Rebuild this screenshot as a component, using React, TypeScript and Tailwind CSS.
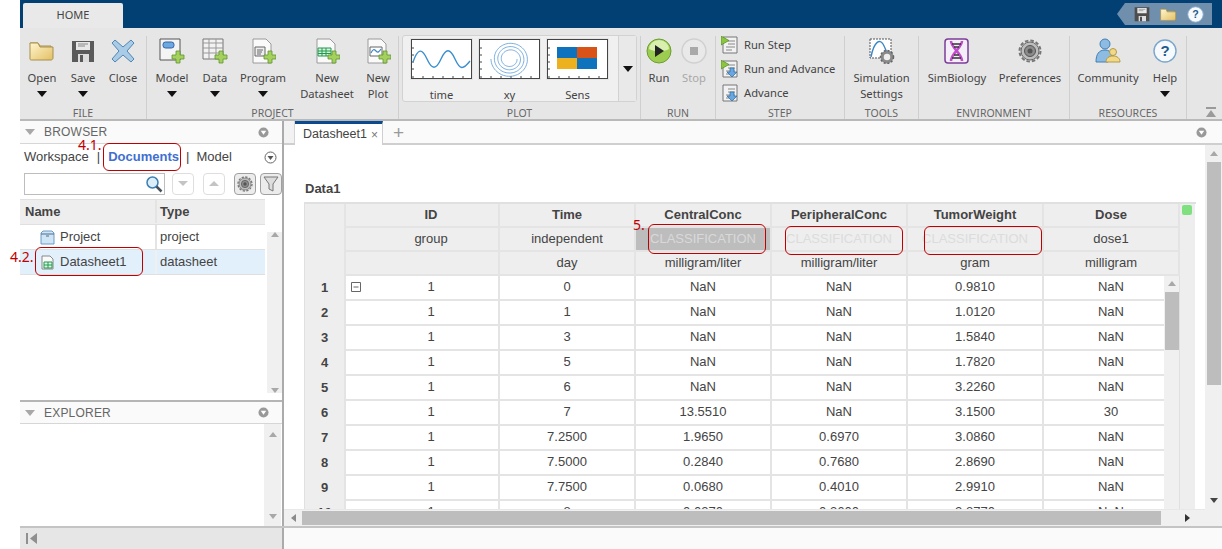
import type { ReactNode } from "react";

const UI = "font-['Noto_Sans','Open_Sans',sans-serif]";
const ARIAL = "font-['Liberation_Sans',Arial,sans-serif]";

function Caret({ className = "" }: { className?: string }) {
  return (
    <svg width="10" height="6" viewBox="0 0 10 6" className={className}>
      <path d="M0 0h10L5 6z" fill="#111" />
    </svg>
  );
}

function Tri({ d, fill = "#a8a8a8", w = 10, h = 6 }: { d: string; fill?: string; w?: number; h?: number }) {
  return (
    <svg width={w} height={h} viewBox={`0 0 ${w} ${h}`}>
      <path d={d} fill={fill} />
    </svg>
  );
}

function FolderIcon({ size = 26 }: { size?: number }) {
  return (
    <svg width={size} height={size} viewBox="0 0 26 26">
      <path d="M1 5h8l2 3h11v3H4z" fill="#e9d9a0" stroke="#a98f4d" />
      <path d="M1 5v16c0 1 1 1 2 1h19c1 0 2-1 2-2V9H11L9 5z" fill="url(#fo)" stroke="#a98f4d" />
      <defs>
        <linearGradient id="fo" x1="0" y1="0" x2="1" y2="1">
          <stop offset="0" stopColor="#fff6cf" />
          <stop offset="1" stopColor="#e3bf63" />
        </linearGradient>
      </defs>
    </svg>
  );
}

function SaveIcon({ size = 24, color = "#5a5a5a" }: { size?: number; color?: string }) {
  return (
    <svg width={size} height={size} viewBox="0 0 24 24">
      <path d="M1 2h22v21H1z" fill={color} />
      <path d="M5 3h14v8H5z" fill="#e8e8e8" />
      <path d="M7 5h10M7 7h7" stroke="#888" />
      <path d="M7 15h11v8H7z" fill="#ddd" />
      <path d="M9 16h3v7H9z" fill={color} />
    </svg>
  );
}

function CloseIcon() {
  return (
    <svg width="26" height="26" viewBox="0 0 26 26">
      <path
        d="M5 2l8 7 8-7 3 3-7 8 7 8-3 3-8-7-8 7-3-3 7-8-7-8z"
        fill="#a9cbe6"
        stroke="#4f86b5"
        strokeLinejoin="round"
      />
    </svg>
  );
}

function Plus({ x, y }: { x: number; y: number }) {
  return (
    <path
      transform={`translate(${x} ${y})`}
      d="M4 0h4v4h4v4H8v4H4V8H0V4h4z"
      fill="#a4d05c"
      stroke="#5f9430"
      strokeWidth="0.8"
    />
  );
}

function DocBase() {
  return <path d="M3 1h13l5 5v19H3z" fill="#fafafa" stroke="#9a9a9a" />;
}

function ModelIcon() {
  return (
    <svg width="26" height="26" viewBox="0 0 26 26">
      <path d="M1 1h20v21H1z" fill="#f4f4f4" stroke="#555" />
      <rect x="4" y="4" width="11" height="6" rx="2.5" fill="#6fa8e0" stroke="#2f64a8" />
      <Plus x={13} y={13} />
    </svg>
  );
}

function DataIcon() {
  return (
    <svg width="26" height="26" viewBox="0 0 26 26">
      <path d="M1 1h20v20H1z" fill="#f2f2f2" stroke="#777" />
      <path d="M1 5h20M1 10h20M1 15h20M7 1v20M14 1v20" stroke="#999" />
      <Plus x={13} y={13} />
    </svg>
  );
}

function ProgramIcon() {
  return (
    <svg width="26" height="26" viewBox="0 0 26 26">
      <DocBase />
      <path d="M5 9h10v9H5z" fill="#eee" stroke="#666" />
      <path d="M7 12h6M7 14h5M7 16h4" stroke="#666" />
      <Plus x={14} y={13} />
    </svg>
  );
}

function DatasheetIcon() {
  return (
    <svg width="26" height="26" viewBox="0 0 26 26">
      <DocBase />
      <path d="M4 10h13v8H4z" fill="#dff2e0" stroke="#1d9b4c" />
      <path d="M4 13h13M4 15.5h13M8 10v8M12 10v8" stroke="#1d9b4c" />
      <Plus x={14} y={13} />
    </svg>
  );
}

function PlotDocIcon() {
  return (
    <svg width="26" height="26" viewBox="0 0 26 26">
      <DocBase />
      <path d="M5 9h12v9H5z" fill="#fff" stroke="#666" />
      <path d="M6 15c2-4 3-4 5-2s3 1 5-2" stroke="#3b87c9" fill="none" strokeWidth="1.2" />
      <Plus x={14} y={13} />
    </svg>
  );
}

function Thumb({ children }: { children: ReactNode }) {
  return (
    <div className="w-[61px] h-[40px] bg-white border border-[#444] shadow-[0_0_0_1px_#e4e4e4]">
      <svg width="59" height="38" viewBox="0 0 59 38">
        <path
          d="M1 38v-2M11 38v-2M21 38v-2M31 38v-2M41 38v-2M51 38v-2M0 8h2M0 15h2M0 22h2M0 29h2"
          stroke="#444"
        />
        {children}
      </svg>
    </div>
  );
}

function Spiral() {
  const pts: string[] = [];
  for (let i = 0; i <= 220; i++) {
    const t = (i / 220) * Math.PI * 7;
    const r = 7 + 0.55 * t;
    pts.push(`${(30 + r * Math.cos(t)).toFixed(1)},${(19 + r * 0.95 * Math.sin(t)).toFixed(1)}`);
  }
  return <polyline points={pts.join(" ")} fill="none" stroke="#5b9bd5" strokeWidth="0.8" />;
}

function RunButton() {
  return (
    <svg width="26" height="26" viewBox="0 0 26 26">
      <circle cx="13" cy="13" r="12" fill="#9ccc50" stroke="#6d9e32" />
      <path d="M3 11a10 9 0 0 1 20 0c-5 3-15 3-20 0z" fill="#d9efaf" />
      <path d="M9 7l9 6-9 6z" fill="#222" />
    </svg>
  );
}

function StopButton() {
  return (
    <svg width="26" height="26" viewBox="0 0 26 26">
      <circle cx="13" cy="13" r="12" fill="#e9e9e9" stroke="#d0d0d0" strokeWidth="1.5" />
      <rect x="9" y="9" width="8" height="8" fill="#a9a9a9" />
    </svg>
  );
}

function StepIcon({ down, play }: { down?: boolean; play?: boolean }) {
  return (
    <svg width="18" height="18" viewBox="0 0 18 18">
      <path d="M2 1h14v16H2z" fill="#f2f2f2" stroke="#777" />
      <path d="M7 5h7M7 8h7M5 11h9M5 14h6" stroke="#888" />
      {play && <path d="M0 0l8 4.500-8 4.500z" fill="#8cc63f" stroke="#4e8a1f" strokeWidth="0.7" />}
      {down && <path d="M9 8h4v4h3l-5 5-5-5h3z" fill="#6aa7de" stroke="#2a6aa8" strokeWidth="0.7" />}
    </svg>
  );
}

function SimSettingsIcon() {
  return (
    <svg width="26" height="26" viewBox="0 0 26 26">
      <path d="M1 1h21v19H1z" fill="#fff" stroke="#555" strokeDasharray="2 1" />
      <path d="M2 19C5 3 11 1 14 6s3 9 6 11" fill="none" stroke="#3b87c9" strokeWidth="1.4" />
      <SmallGear x={18} y={19} r={6.500} />
    </svg>
  );
}

function SmallGear({ x, y, r }: { x: number; y: number; r: number }) {
  return (
    <g>
      <circle cx={x} cy={y} r={r} fill="#8a8a8a" />
      <circle cx={x} cy={y} r={r} fill="none" stroke="#666" strokeWidth="1.500" strokeDasharray="2 1.800" />
      <circle cx={x} cy={y} r={r * 0.5} fill="#eee" />
    </g>
  );
}

function GearIcon({ size = 24 }: { size?: number }) {
  return (
    <svg width={size} height={size} viewBox="0 0 24 24">
      <circle cx="12" cy="12" r="9" fill="#bdbdbd" stroke="#666" />
      <circle cx="12" cy="12" r="10.500" fill="none" stroke="#777" strokeWidth="2" strokeDasharray="3.500 2" />
      <circle cx="12" cy="12" r="5.500" fill="#8c8c8c" stroke="#555" />
      <circle cx="12" cy="12" r="2.500" fill="#555" />
    </svg>
  );
}

function SimBiologyIcon() {
  return (
    <svg width="26" height="26" viewBox="0 0 26 26">
      <rect x="1" y="1" width="23" height="24" rx="3" fill="#f4eef8" stroke="#7b3f98" strokeWidth="1.500" />
      <path d="M7 3c0 7 11 12 11 20M18 3c0 7-11 12-11 20" fill="none" stroke="#c04ccb" strokeWidth="2.500" />
      <path d="M8 6h9M10 9h5M10 17h5M8 20h9" stroke="#333" strokeWidth="1.300" />
    </svg>
  );
}

function CommunityIcon() {
  return (
    <svg width="26" height="26" viewBox="0 0 26 26">
      <circle cx="10" cy="6" r="5" fill="#8dbbe2" stroke="#3f7fb5" />
      <path d="M1 24c0-8 3-12 9-12 4 0 6 2 7 5l-4 7z" fill="#8dbbe2" stroke="#3f7fb5" />
      <circle cx="18" cy="14" r="3.500" fill="#f2d98a" stroke="#b39a42" />
      <path d="M11 24c0-4 3-6 7-6s7 2 7 6z" fill="#f2d98a" stroke="#b39a42" />
    </svg>
  );
}

function HelpIcon({ size = 24 }: { size?: number }) {
  return (
    <svg width={size} height={size} viewBox="0 0 24 24">
      <circle cx="12" cy="12" r="11" fill="#f7fafd" stroke="#7ba6cc" strokeWidth="1.400" />
      <text x="12" y="17" textAnchor="middle" fontSize="15" fontWeight="700" fontFamily="Liberation Sans" fill="#1f5a8e">
        ?
      </text>
    </svg>
  );
}

function RibbonItem({
  w,
  icon,
  lines,
  caret,
  muted,
  className = "",
}: {
  w: string;
  icon: ReactNode;
  lines: string[];
  caret?: boolean;
  muted?: boolean;
  className?: string;
}) {
  return (
    <div className={`flex flex-col items-center pt-[2px] ${w} ${className}`}>
      <div className="h-[26px] flex items-center justify-center">{icon}</div>
      <div className={`mt-[6px] text-[11.200px] leading-[16px] text-center whitespace-nowrap ${muted ? "text-[#a8a8a8]" : "text-[#444]"}`}>
        {lines.map((l) => (
          <div key={l}>{l}</div>
        ))}
      </div>
      {caret && <Caret className="mt-[5px]" />}
    </div>
  );
}

function Section({ w, label, children, className = "" }: { w: string; label: string; children: ReactNode; className?: string }) {
  return (
    <div className={`${w} shrink-0 mt-[8px] flex flex-col border-r border-[#cfcfcf] ${className}`}>
      <div className="flex h-[70px]">{children}</div>
      <div className="h-[14px] pt-[1px] leading-[14px] text-[10.500px] text-[#666] text-center whitespace-nowrap">{label}</div>
    </div>
  );
}

function StepRow({ icon, label }: { icon: ReactNode; label: string }) {
  return (
    <div className="h-[24px] shrink-0 flex items-center pl-[5px] gap-[5px] text-[11.200px] text-[#444] whitespace-nowrap">
      {icon}
      <span>{label}</span>
    </div>
  );
}

function Ribbon() {
  return (
    <div className={`${UI} h-[93px] bg-[#e6e6e6] border-b-2 border-[#b9b9b9] flex`}>
      <Section w="w-[127px]" label="FILE">
        <div className="w-[2px]" />
        <RibbonItem w="w-[40px]" icon={<FolderIcon />} lines={["Open"]} caret className="" />
        <RibbonItem w="w-[42px]" icon={<SaveIcon />} lines={["Save"]} caret />
        <RibbonItem w="w-[38px]" icon={<CloseIcon />} lines={["Close"]} />
      </Section>
      <Section w="w-[252px]" label="PROJECT">
        <div className="w-[3px]" />
        <RibbonItem w="w-[44px]" icon={<ModelIcon />} lines={["Model"]} caret />
        <RibbonItem w="w-[42px]" icon={<DataIcon />} lines={["Data"]} caret />
        <RibbonItem w="w-[54px]" icon={<ProgramIcon />} lines={["Program"]} caret />
        <RibbonItem w="w-[60px] ml-[7px]" icon={<DatasheetIcon />} lines={["New", "Datasheet"]} />
        <RibbonItem w="w-[36px] ml-[3px]" icon={<PlotDocIcon />} lines={["New", "Plot"]} />
      </Section>
      <Section w="w-[242px]" label="PLOT">
        <div className="ml-[3px] w-[235px] h-[67px] -mt-[1px] bg-[#f0f0f0] border border-[#d2d2d2] rounded-[3px] flex">
          <div className="w-[215px] pl-[8px] pt-[3px] flex gap-[7px]">
            {[
              {
                n: "time",
                c: <path d="M1 22C6 8 10 8 15 19s9 11 14 0 9-11 14 0 8 11 15 2" fill="none" stroke="#3b8fce" strokeWidth="1.400" />,
              },
              { n: "xy", c: <Spiral /> },
              {
                n: "Sens",
                c: (
                  <g>
                    <path d="M9 7h20v11H9z" fill="#0f72bd" />
                    <path d="M29 7h20v11H29z" fill="#d95319" />
                    <path d="M9 18h20v11H9z" fill="#edb120" />
                    <path d="M29 18h20v11H29z" fill="#0f72bd" />
                  </g>
                ),
              },
            ].map((t) => (
              <div key={t.n} className="w-[61px] flex flex-col items-center">
                <Thumb>{t.c}</Thumb>
                <div className="mt-[8px] text-[11.200px] leading-[16px] text-[#444]">{t.n}</div>
              </div>
            ))}
          </div>
          <div className="flex-1 border-l border-[#d2d2d2] bg-[#e9e9e9] flex items-center justify-center">
            <Caret />
          </div>
        </div>
      </Section>
      <Section w="w-[75px]" label="RUN">
        <RibbonItem w="w-[36px]" icon={<RunButton />} lines={["Run"]} />
        <RibbonItem w="w-[34px]" icon={<StopButton />} lines={["Stop"]} muted />
      </Section>
      <Section w="w-[129px]" label="STEP">
        <div className="flex flex-col -mt-[3px]">
          <StepRow icon={<StepIcon play />} label="Run Step" />
          <StepRow icon={<StepIcon play down />} label="Run and Advance" />
          <StepRow icon={<StepIcon down />} label="Advance" />
        </div>
      </Section>
      <Section w="w-[74px]" label="TOOLS">
        <RibbonItem w="w-[73px]" icon={<SimSettingsIcon />} lines={["Simulation", "Settings"]} />
      </Section>
      <Section w="w-[151px]" label="ENVIRONMENT">
        <RibbonItem w="w-[76px]" icon={<SimBiologyIcon />} lines={["SimBiology"]} />
        <RibbonItem w="w-[70px]" icon={<GearIcon />} lines={["Preferences"]} />
      </Section>
      <Section w="w-[117px]" label="RESOURCES">
        <RibbonItem w="w-[76px]" icon={<CommunityIcon />} lines={["Community"]} />
        <RibbonItem w="w-[38px]" icon={<HelpIcon />} lines={["Help"]} caret />
      </Section>
      <div className="flex-1 flex items-end justify-center pb-[1px] pl-[13px]">
        <svg width="12" height="12" viewBox="0 0 12 12">
          <path d="M1 1h10v2H1z" fill="#9a9a9a" />
          <path d="M6 4l5 7H1z" fill="#9a9a9a" />
        </svg>
      </div>
    </div>
  );
}

function PanelHeader({ label, h }: { label: string; h: string }) {
  return (
    <div className={`${h} shrink-0 bg-[#fafafa] border-b border-[#d6d6d6] flex items-center pl-[5px] pr-[13px] text-[12px] text-[#666] ${ARIAL}`}>
      <Tri d="M0 0h10L5 6z" />
      <span className="ml-[9px] tracking-[0.2px]">{label}</span>
      <svg width="11" height="11" viewBox="0 0 12 12" className="ml-auto">
        <circle cx="6" cy="6" r="5.500" fill="#999" />
        <path d="M3 4h6L6 8.500z" fill="#fff" />
      </svg>
    </div>
  );
}

function SmallButton({ children, active }: { children: ReactNode; active?: boolean }) {
  return (
    <div className={`w-[22px] h-[22px] rounded-[4px] border flex items-center justify-center ${active ? "border-[#a0a0a0] bg-[#ececec]" : "border-[#dedede] bg-white"}`}>
      {children}
    </div>
  );
}

function Browser() {
  return (
    <div className={`${ARIAL} w-[264px] shrink-0 flex flex-col border-r-2 border-[#ababab]`}>
      <PanelHeader label="BROWSER" h="h-[23px]" />
      <div className="h-[26px] shrink-0 flex items-center pl-[4px] pr-[5px] text-[13px] text-[#444] whitespace-nowrap">
        <span>Workspace</span>
        <span className="ml-[8px]">|</span>
        <span className="ml-[8px] font-bold text-[#3f6fd0]">Documents</span>
        <span className="ml-[7px]">|</span>
        <span className="ml-[7px]">Model</span>
        <svg width="13" height="13" viewBox="0 0 13 13" className="ml-auto">
          <circle cx="6.500" cy="6.500" r="5.500" fill="#fff" stroke="#666" />
          <path d="M3.500 5h6l-3 4z" fill="#555" />
        </svg>
      </div>
      <div className="h-[29px] shrink-0 flex items-center pl-[4px] pb-[1px]">
        <div className="w-[148px] h-[22px] border border-[#bdbdbd] flex items-center justify-end pr-[1px]">
          <svg width="18" height="18" viewBox="0 0 18 18">
            <circle cx="7.500" cy="7.500" r="5.500" fill="#dceefa" stroke="#3c7fb0" strokeWidth="1.500" />
            <path d="M11.500 11.500l5 5" stroke="#45525c" strokeWidth="2.500" />
          </svg>
        </div>
        <div className="ml-[7px] flex gap-[4px]">
          <SmallButton>
            <Tri d="M0 0h10L5 5z" fill="#c4c4c4" />
          </SmallButton>
          <div className="w-[1px]" />
          <SmallButton>
            <Tri d="M0 5h10L5 0z" fill="#c4c4c4" />
          </SmallButton>
          <div className="w-[1px]" />
          <SmallButton active>
            <GearIcon size={16} />
          </SmallButton>
          <SmallButton active>
            <svg width="16" height="16" viewBox="0 0 16 16">
              <path d="M1 1h14L10 8v7l-4-2V8z" fill="#ddd" stroke="#777" />
            </svg>
          </SmallButton>
        </div>
      </div>
      <div className="h-[203px] shrink-0 flex text-[13px] text-[#444] border-b-2 border-[#b5b5b5]">
        <div className="w-[245px] flex flex-col">
          <div className="h-[26px] pb-[1px] bg-[#eeeeee] border-y border-[#e0e0e0] flex font-bold items-center">
            <span className="w-[137px] pl-[5px] border-r-2 border-[#e4e4e4] h-full flex items-center">Name</span>
            <span className="pl-[3px]">Type</span>
          </div>
          <div className="h-[25px] flex items-center border-b border-[#e0e0e0]">
            <div className="w-[137px] pl-[20px] border-r-2 border-[#e4e4e4] h-full flex items-center gap-[5px]">
              <svg width="15" height="15" viewBox="0 0 15 15">
                <path d="M1 3l2-2h9l2 2v11H1z" fill="#cfe4f5" stroke="#6a9cc4" />
                <path d="M1 4h13M6 6h3" stroke="#4a6f8d" />
              </svg>
              <span>Project</span>
            </div>
            <span className="pl-[3px]">project</span>
          </div>
          <div className="h-[25px] flex items-center bg-[#e1f0fb] border-b border-[#e0e0e0]">
            <div className="w-[137px] pl-[20px] border-r-2 border-[#f0f0f0] h-full flex items-center gap-[5px]">
              <svg width="15" height="15" viewBox="0 0 15 15">
                <path d="M2 1h8l3 3v10H2z" fill="#fafafa" stroke="#888" />
                <path d="M4 7h8v6H4zM4 10h8M8 7v6" fill="#e8f6e8" stroke="#1d9b4c" />
              </svg>
              <span>Datasheet1</span>
            </div>
            <span className="pl-[3px]">datasheet</span>
          </div>
        </div>
        <div className="flex-1 bg-[#f0f0f0] flex flex-col items-center justify-between pt-[33px] pb-[7px] pl-[2px] bg-clip-content">
          <Tri d="M0 5h8L4 0z" w={8} h={5} />
          <Tri d="M0 0h8L4 5z" w={8} h={5} />
        </div>
      </div>
      <PanelHeader label="EXPLORER" h="h-[22px]" />
      <div className="flex-1 flex justify-end">
        <div className="w-[17px] mr-[1px] bg-[#f0f0f0] flex flex-col items-center justify-between pt-[8px] pb-[7px]">
          <Tri d="M0 5h8L4 0z" w={8} h={5} />
          <Tri d="M0 0h8L4 5z" w={8} h={5} />
        </div>
      </div>
    </div>
  );
}

const COLS = "grid grid-cols-[41px_154px_136px_136px_136px_136px_136px_15px]";

const HEAD = [
  ["ID", "Time", "CentralConc", "PeripheralConc", "TumorWeight", "Dose"],
  ["group", "independent", "CLASSIFICATION", "CLASSIFICATION", "CLASSIFICATION", "dose1"],
  ["", "day", "milligram/liter", "milligram/liter", "gram", "milligram"],
];

const ROWS = [
  ["1", "0", "NaN", "NaN", "0.9810", "NaN"],
  ["1", "1", "NaN", "NaN", "1.0120", "NaN"],
  ["1", "3", "NaN", "NaN", "1.5840", "NaN"],
  ["1", "5", "NaN", "NaN", "1.7820", "NaN"],
  ["1", "6", "NaN", "NaN", "3.2260", "NaN"],
  ["1", "7", "13.5510", "NaN", "3.1500", "30"],
  ["1", "7.2500", "1.9650", "0.6970", "3.0860", "NaN"],
  ["1", "7.5000", "0.2840", "0.7680", "2.8690", "NaN"],
  ["1", "7.7500", "0.0680", "0.4010", "2.9910", "NaN"],
  ["1", "8", "0.0370", "0.3600", "2.8770", "NaN"],
];

function HeaderRow({ cells, index }: { cells: string[]; index: number }) {
  return (
    <div className={`${COLS} h-[24px]`}>
      <div className="bg-[#eeeeee] border-r-2 border-[#e4e4e4]" />
      {cells.map((c, i) => {
        const isClass = c === "CLASSIFICATION";
        const hot = isClass && i === 2;
        return (
          <div
            key={i}
            className={`flex items-center justify-center border-r-2 border-b-2 border-[#e4e4e4] ${i === 0 ? "pl-[18px]" : ""} ${hot ? "bg-[#bdbdbd] text-[#d9d9d9]" : isClass ? "bg-[#eeeeee] text-[#dcdcdc]" : "bg-[#eeeeee]"} ${index === 0 ? "font-bold" : ""}`}
          >
            {c}
          </div>
        );
      })}
      <div className="bg-[#eeeeee] relative">
        {index === 0 && <div className="absolute left-[2px] top-[1px] w-[10px] h-[10px] rounded-[2px] bg-[#7fe07f]" />}
      </div>
    </div>
  );
}

function DataSheet() {
  return (
    <div className="flex-1 min-w-0 flex flex-col">
      <div className="h-[57px] shrink-0 flex items-end pl-[21px] pb-[4px] font-bold text-[13px] text-[#444]">Data1</div>
      <div className="flex-1 min-h-0 overflow-hidden pl-[20px]">
        <div className="relative w-[892px] border-l border-t-2 border-[#e0e0e0] text-[13px] text-[#444]">
          {HEAD.map((cells, i) => (
            <HeaderRow key={i} cells={cells} index={i} />
          ))}
          {ROWS.map((cells, r) => (
            <div key={r} className={`${COLS} h-[25px]`}>
              <div className="pb-[1px] bg-[#eeeeee] border-r-2 border-[#e4e4e4] flex items-center justify-center font-bold">{r + 1}</div>
              {cells.map((c, i) => (
                <div key={i} className={`relative pb-[1px] flex items-center justify-center border-r-2 border-b-2 border-[#e4e4e4] bg-white ${i === 0 ? "pl-[18px]" : ""}`}>
                  {r === 0 && i === 0 && (
                    <svg width="10" height="10" viewBox="0 0 10 10" className="absolute left-[5px] top-[6px]">
                      <path d="M.5.500h9v9h-9zM2.500 5h5" fill="#fff" stroke="#666" />
                    </svg>
                  )}
                  {c}
                </div>
              ))}
              <div className="bg-[#eeeeee]" />
            </div>
          ))}
          <div className="absolute left-[859px] top-[72px] w-[16px] h-[300px] bg-[#f0f0f0] flex flex-col items-center pt-[5px] border-r border-[#e0e0e0]">
            <Tri d="M0 5h8L4 0z" w={8} h={5} />
            <div className="mt-[6px] w-[14px] h-[58px] bg-[#bdbdbd]" />
          </div>
        </div>
      </div>
      <div className="h-[17px] shrink-0 flex items-center bg-[#f0f0f0] border-t border-[#e8e8e8]">
        <div className="w-[18px] flex justify-center">
          <Tri d="M5 0v8L0 4z" w={5} h={8} fill="#8a8a8a" />
        </div>
        <div className="w-[859px] h-[14px] bg-[#bdbdbd]" />
        <div className="w-[35px] flex justify-end pr-[6px]">
          <Tri d="M0 0v8l5-4z" w={5} h={8} fill="#333" />
        </div>
      </div>
    </div>
  );
}

function Callout({ className }: { className: string }) {
  return <div className={`absolute border border-[#c00000] rounded-[6px] ${className}`} />;
}

function Note({ className, children }: { className: string; children: ReactNode }) {
  return <div className={`absolute text-[14px] leading-[14px] text-[#c00000] ${UI} ${className}`}>{children}</div>;
}

export default function App() {
  return (
    <div className="relative w-[1222px] h-[549px] overflow-hidden bg-white pl-[20px] flex flex-col">
      <div className={`${UI} h-[28px] shrink-0 bg-[#023f73] flex pl-[3px] pt-[3px] relative`}>
        <div className="w-[100px] h-[25px] bg-[#e9e9e9] rounded-t-[2px] flex items-center justify-center text-[11px] text-[#444]">HOME</div>
        <div className="ml-auto mr-[10px] w-[95px] h-[22px] bg-[#6f8fac] [clip-path:polygon(8px_0,100%_0,100%_100%,8px_100%,0_50%)] flex items-center pl-[17px] gap-[10px]">
          <SaveIcon size={16} color="#4d4d4d" />
          <FolderIcon size={17} />
          <HelpIcon size={17} />
        </div>
      </div>
      <Ribbon />
      <div className="flex-1 min-h-0 flex">
        <Browser />
        <div className={`${ARIAL} flex-1 min-w-0 flex flex-col`}>
          <div className="h-[24px] shrink-0 bg-[#fafafa] border-b-2 border-[#cfcfcf] flex items-stretch pr-[15px]">
            <div className="w-[11px] bg-[#f2f2f2] border-r border-[#d4d4d4]" />
            <div className="w-[88px] -mb-[2px] bg-white border-t-[3px] border-[#0b4a8f] border-r border-r-[#cfcfcf] flex items-center pl-[8px] text-[12.500px] text-[#444] whitespace-nowrap">
              Datasheet1
              <span className="ml-[4px] text-[12px] text-[#777]">×</span>
            </div>
            <div className="ml-[10px] flex items-center text-[19px] leading-none text-[#9a9a9a]">+</div>
            <svg width="11" height="11" viewBox="0 0 12 12" className="ml-auto self-center">
              <circle cx="6" cy="6" r="5.500" fill="#999" />
              <path d="M3 4h6L6 8.500z" fill="#fff" />
            </svg>
          </div>
          <div className="flex-1 min-h-0 flex">
            <DataSheet />
            <div className="w-[17px] shrink-0 bg-[#f0f0f0] flex flex-col items-center pt-[6px] pb-[23px]">
              <Tri d="M0 5h8L4 0z" w={8} h={5} />
              <div className="mt-[6px] w-[14px] h-[223px] bg-[#bdbdbd]" />
              <div className="mt-auto">
                <Tri d="M0 0h8L4 5z" w={8} h={5} fill="#444" />
              </div>
            </div>
          </div>
        </div>
      </div>
      <div className="h-[23px] shrink-0 flex border-t-2 border-[#c4c4c4]">
        <div className="w-[264px] bg-[#e6e6e6] border-r-2 border-[#ababab] flex items-center pl-[6px]">
          <svg width="11" height="11" viewBox="0 0 11 11">
            <path d="M0 0h2v11H0zM11 0v11L4 5.500z" fill="#8f8f8f" />
          </svg>
        </div>
        <div className="flex-1 bg-[#fafafa]" />
      </div>

      <Callout className="left-[103px] top-[143px] w-[78px] h-[28px]" />
      <Callout className="left-[35px] top-[247px] w-[108px] h-[29px]" />
      <Callout className="left-[648px] top-[224px] w-[118px] h-[30px]" />
      <Callout className="left-[785px] top-[226px] w-[118px] h-[29px]" />
      <Callout className="left-[924px] top-[226px] w-[118px] h-[29px]" />
      <Note className="left-[78px] top-[138px]">4.1.</Note>
      <Note className="left-[10px] top-[250px]">4.2.</Note>
      <Note className="left-[633px] top-[218px]">5.</Note>
    </div>
  );
}
